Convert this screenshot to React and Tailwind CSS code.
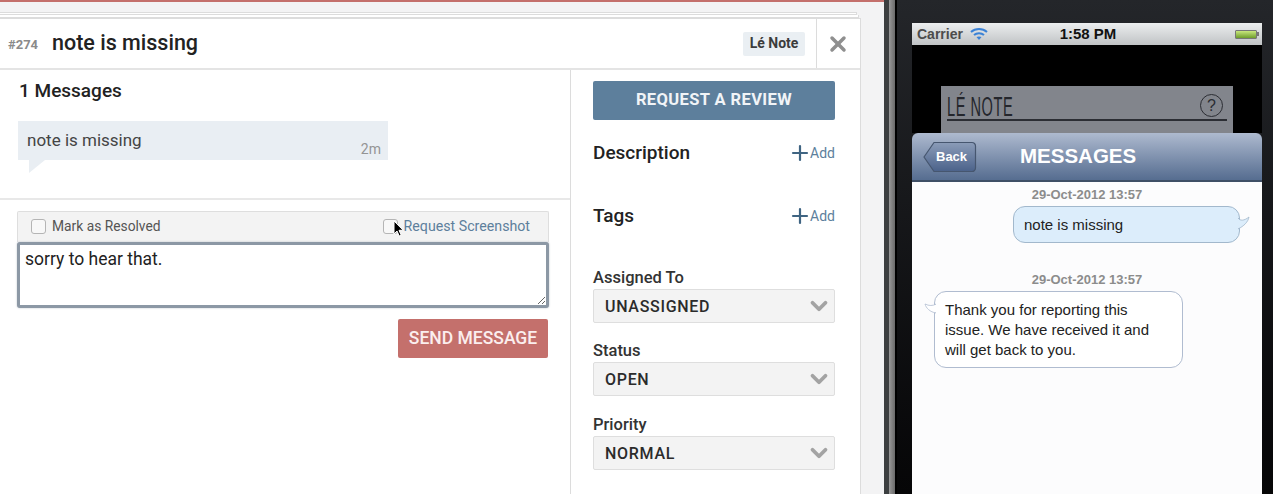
import { ChevronDown, Plus, X } from "lucide-react";

const din = "font-['Roboto',sans-serif]";
const arial = "font-['Liberation_Sans',Arial,sans-serif]";

const Checkbox = () => (
  <span className="inline-block h-[15px] w-[15px] rounded-[3px] border border-[#b5b5b5] bg-[#f8f8f8]" />
);

const SideHeading = ({ title, className }) => (
  <div className={`flex items-center justify-between ${className}`}>
    <span className="text-[19px] font-medium leading-6 text-[#222]">{title}</span>
    <span className="flex items-center text-[14px] leading-5 text-[#5d7f9c]">
      <Plus size={24} strokeWidth={2.2} className="-mr-[2px] text-[#3f6482]" />
      Add
    </span>
  </div>
);

const PickField = ({ label, value, className }) => (
  <div className={className}>
    <div className="text-[16.5px] font-medium leading-5 text-[#333]">{label}</div>
    <div className="mt-[1px] flex h-[34px] items-center justify-between rounded-[2px] border border-[#dedede] bg-[#f3f3f3] pl-[11px] pr-[2px]">
      <span className="pt-[1px] text-[16px] font-medium tracking-[0.7px] text-[#2b2b2b]">{value}</span>
      <ChevronDown size={26} strokeWidth={3.5} className="text-[#a3a3a3]" />
    </div>
  </div>
);

const Issue = () => (
  <div className="flex w-[884px] shrink-0 flex-col bg-[#f3f3f4]">
    <div className="h-[2px] bg-[#c4706c]" />
    <div className="mt-[10px] h-[3px] w-[857px] border border-l-0 border-[#dcdcdc] bg-white" />
    <div className="mt-[0px] h-[3px] w-[859px] border-r border-b border-[#dcdcdc] bg-white" />
    <div className="flex min-h-0 w-[861px] flex-1 flex-col border-r border-t border-[#dcdcdc] bg-white">
      <header className="flex h-[51px] shrink-0 items-center border-b-2 border-[#e4e4e4]">
        <span className="ml-2 w-[44px] pt-[2px] text-[13px] font-bold text-[#8a8a8a]">#274</span>
        <h1 className="text-[21.5px] font-medium text-[#222]">note is missing</h1>
        <span className="ml-auto mr-[11px] flex h-[24px] w-[62px] items-center justify-center rounded-[2px] bg-[#eaeff3] text-[14px] font-bold text-[#3c3c3c]">
          Lé Note
        </span>
        <div className="flex h-full w-[44px] items-center justify-center border-l border-[#dcdcdc]">
          <X size={24} strokeWidth={3.5} className="-ml-[1px] text-[#8f8f8f]" />
        </div>
      </header>
      <div className="flex min-h-0 flex-1">
        <div className="w-[571px] shrink-0 border-r border-[#dcdcdc]">
          <div className="h-[130px] border-b-2 border-[#e8e8e8] pl-[18px]">
            <div className="ml-px pt-[9px] text-[19px] font-medium leading-6 text-[#222]">1 Messages</div>
            <div className="relative mt-[18px] flex h-[39px] w-[370px] justify-between bg-[#e9eef3] pl-[9px] pr-[7px]">
              <span className="pt-[9px] text-[17px] leading-5 text-[#444]">note is missing</span>
              <span className="pt-[18px] text-[14px] leading-5 text-[#949494]">2m</span>
              <span className="absolute left-[11px] top-full h-0 w-0 border-r-[16px] border-t-[13px] border-r-transparent border-t-[#e9eef3]" />
            </div>
          </div>
          <div className="relative ml-[17px] mt-[11px] w-[532px]">
            <div className="flex h-[31px] items-center justify-between rounded-t-[2px] border border-b-0 border-[#dedede] bg-[#f3f3f3] pb-[1px] pl-[13px] pr-[18px]">
              <label className="flex items-center gap-[6px] text-[13.8px] text-[#555]">
                <Checkbox />
                Mark as Resolved
              </label>
              <label className="flex items-center gap-[6px] text-[14.2px] text-[#5d7f9c]">
                <Checkbox />
                Request Screenshot
              </label>
            </div>
            <textarea
              readOnly
              defaultValue="sorry to hear that."
              className="block h-[66px] w-full rounded-[3px] border-[3px] border-[#8c98a5] bg-white px-[5px] py-[2px] text-[17.500px] leading-6 text-[#222] shadow-[0_0_2px_#b5bdc6] outline-none"
            />
            <svg width="12" height="18" viewBox="0 0 12 18" className="absolute left-[376px] top-[9px]">
              <path d="M1 1v13l3-3 2.2 5 2-.9L6 10.3h4.2z" fill="#000" stroke="#fff" strokeWidth="1" />
            </svg>
            <button className="ml-auto mr-[1px] mt-[11px] flex h-[39px] w-[150px] items-center justify-center rounded-[2px] bg-[#c4706c] text-[17.500px] font-medium text-[#fbeeee]">
              SEND MESSAGE
            </button>
          </div>
        </div>
        <aside className="flex-1 pl-[22px] pr-[25px] pt-[11px]">
          <button className="flex h-[39px] w-full items-center justify-center rounded-[2px] bg-[#5d7f9c] text-[16.500px] font-bold tracking-[0.4px] text-[#f1f4f7]">
            REQUEST A REVIEW
          </button>
          <SideHeading title="Description" className="mt-[21px]" />
          <SideHeading title="Tags" className="mt-[39px]" />
          <PickField label="Assigned To" value="UNASSIGNED" className="mt-[40px]" />
          <PickField label="Status" value="OPEN" className="mt-[18px]" />
          <PickField label="Priority" value="NORMAL" className="mt-[19px]" />
        </aside>
      </div>
    </div>
  </div>
);

const StatusBar = () => (
  <div className={`flex h-[22px] items-center justify-between bg-gradient-to-b from-[#eceeef] to-[#c0c3c5] pl-[5px] pr-[3px] ${arial}`}>
    <div className="flex w-[145px] items-center gap-[7px]">
      <span className="text-[14px] font-bold text-[#4c4c4c]">Carrier</span>
      <svg width="18" height="14" viewBox="0 0 18 14" fill="none" stroke="#3b82d6" strokeWidth="2">
        <path d="M1 5c4.500-4 11.500-4 16 0" />
        <path d="M4 8c2.800-2.400 7.200-2.400 10 0" />
        <path d="M9 13l-2.500-3c1.500-.8 3.500-.8 5 0z" fill="#3b82d6" stroke="none" />
      </svg>
    </div>
    <span className="whitespace-nowrap text-[15px] font-bold text-[#111]">1:58 PM</span>
    <div className="flex w-[145px] items-center justify-end">
      <span className="h-[9px] w-[22px] rounded-[1px] border border-[#777] bg-gradient-to-b from-[#c9e77d] to-[#6f9e2a]" />
      <span className="h-[4px] w-[2px] bg-[#777]" />
    </div>
  </div>
);

const Phone = () => (
  <div className="flex min-w-0 flex-1">
    <div className="w-[5px] shrink-0 bg-[#3c3f40]" />
    <div className="w-[6px] shrink-0 bg-gradient-to-r from-[#9a9a9a] to-[#6a6a6a]" />
    <div className="w-[378px] shrink-0 border-l-2 border-black bg-gradient-to-b from-[#24262a] to-[#060607] pl-[15px] pr-[11px] pt-[23px]">
      <StatusBar />
      <div className="h-[88px] overflow-hidden bg-black px-[29px] pt-[41px]">
        <div className="h-[60px] bg-[#82858c] px-[6px] pt-[5px]">
          <div className="flex h-[30px] items-start justify-between border-b-2 border-[#2b2d33]">
            <span className={`origin-left scale-x-[0.54] whitespace-nowrap text-[27px] leading-[32px] tracking-[1px] text-[#24262c] ${arial}`}>LÉ NOTE</span>
            <span className={`mr-[4px] mt-[3px] flex h-[23px] w-[23px] items-center justify-center rounded-full border-[1.500px] border-[#2b2d33] text-[16px] text-[#2b2d33] ${arial}`}>?</span>
          </div>
        </div>
      </div>
      <div className={`h-[361px] overflow-hidden rounded-t-[6px] ${arial}`}>
        <div className="flex h-[49px] items-center border-b-2 border-[#3f4f66] bg-gradient-to-b from-[#aebacf] to-[#566d90] pl-[11px]">
          <div className="relative flex h-[32px] w-[54px]">
            <svg width="54" height="32" viewBox="0 0 54 32" className="absolute inset-0">
              <defs>
                <linearGradient id="backFill" x1="0" y1="0" x2="0" y2="1">
                  <stop offset="0" stopColor="#8b9cb8" />
                  <stop offset="1" stopColor="#4b628a" />
                </linearGradient>
              </defs>
              <path d="M1 16L11 1.500h38a3.500 3.500 0 0 1 3.500 3.500v22a3.500 3.500 0 0 1-3.500 3.500H11z" fill="url(#backFill)" stroke="#46566f" strokeWidth="1.200" />
            </svg>
            <span className="relative w-full pl-[13px] pt-[8px] text-[13px] font-bold leading-4 text-white">Back</span>
          </div>
          <span className="ml-[43px] text-[20.500px] font-bold text-white">MESSAGES</span>
        </div>
        <div className="h-full bg-[#fcfcfd] pt-[5px]">
          <div className="text-center text-[13px] font-bold leading-4 text-[#8c8c8c]">29-Oct-2012 13:57</div>
          <div className="relative ml-[101px] mt-[3px] flex h-[37px] w-[227px] items-center rounded-[12px] border border-[#a2b8cc] bg-[#dcedfb] pl-[10px] pt-[1px] text-[15px] text-[#222]">
            note is missing
            <svg width="12" height="15" viewBox="0 0 12 15" className="absolute -right-[11px] top-[9px]">
              <path d="M0 2c2 3 6 3 11-1-1 5-5 9-11 12z" fill="#dcedfb" stroke="#a2b8cc" strokeWidth="0.800" />
              <path d="M-1 3h2v9h-2z" fill="#dcedfb" />
            </svg>
          </div>
          <div className="mt-[29px] text-center text-[13px] font-bold leading-4 text-[#8c8c8c]">29-Oct-2012 13:57</div>
          <div className="relative ml-[22px] mt-[3px] h-[77px] w-[249px] rounded-[12px] border border-[#b0bcd0] bg-white pl-[10px] pt-[8px] text-[15px] leading-[20px] text-[#222]">
            Thank you for reporting this
            <br />
            issue. We have received it and
            <br />
            will get back to you.
            <svg width="12" height="13" viewBox="0 0 12 13" className="absolute -left-[11px] top-[10px]">
              <path d="M12 2C9 4 5 4 1 2c1 4 5 8 11 9z" fill="#fff" stroke="#b0bcd0" strokeWidth="0.800" />
              <path d="M11 3h2v7h-2z" fill="#fff" />
            </svg>
          </div>
        </div>
      </div>
    </div>
  </div>
);

const App = () => (
  <div className={`flex h-[494px] w-[1273px] overflow-hidden ${din}`}>
    <Issue />
    <Phone />
  </div>
);

export default App;
